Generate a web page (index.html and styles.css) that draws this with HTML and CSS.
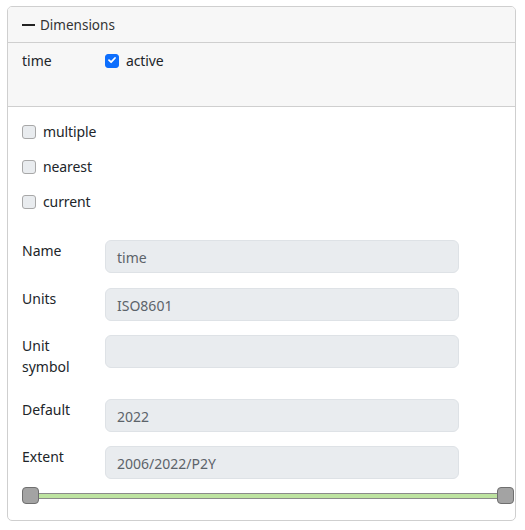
FILE: index.html
```html
<!DOCTYPE html>
<html>
<head>
<meta charset="utf-8">
<link rel="stylesheet" href="styles.css">
</head>
<body>
<div class="card">
  <div class="card-header"><span class="dash"></span>Dimensions</div>
  <div class="dim-row">
    <span class="dim-name">time</span>
    <label class="check"><span class="box checked"><svg viewBox="0 0 14 14" width="14" height="14"><path d="M4 7.2 L6.1 9.2 L10 5" fill="none" stroke="#fff" stroke-width="1.8" stroke-linecap="round" stroke-linejoin="round"/></svg></span>active</label>
  </div>
  <div class="card-body">
    <div class="checks">
      <label class="check"><span class="box"></span>multiple</label>
      <label class="check"><span class="box"></span>nearest</label>
      <label class="check"><span class="box"></span>current</label>
    </div>
    <div class="form">
      <div class="row"><div class="lbl">Name</div><div class="input">time</div></div>
      <div class="row"><div class="lbl">Units</div><div class="input">ISO8601</div></div>
      <div class="row"><div class="lbl">Unit<br>symbol</div><div class="input"></div></div>
      <div class="row"><div class="lbl">Default</div><div class="input">2022</div></div>
      <div class="row"><div class="lbl">Extent</div><div class="input">2006/2022/P2Y</div></div>
    </div>
    <div class="slider">
      <span class="thumb"></span>
      <span class="track"></span>
      <span class="thumb"></span>
    </div>
  </div>
</div>
</body>
</html>
```

FILE: styles.css
```css
* { box-sizing: border-box; }
body {
  margin: 0;
  padding: 6px 9px 9px 7px;
  font-family: "Noto Sans", "DejaVu Sans", sans-serif;
  font-size: 14px;
  color: #212529;
  background: #fff;
}
.card {
  border: 1px solid #cfcfcf;
  border-radius: 5px;
  overflow: hidden;
  width: 509px;
}
.card-header {
  height: 36px;
  background: #f7f7f7;
  border-bottom: 1px solid #cfcfcf;
  display: flex;
  align-items: center;
  padding-left: 14px;
  font-size: 13.5px;
  color: #333;
}
.dash {
  display: inline-block;
  width: 13px;
  height: 2px;
  background: #222;
  margin-right: 5px;
}
.dim-row {
  height: 64px;
  background: #f7f7f7;
  border-bottom: 1px solid #cfcfcf;
  display: flex;
  align-items: flex-start;
  padding: 7px 0 0 14px;
}
.dim-name { width: 83px; line-height: 21px; }
.check {
  display: flex;
  align-items: center;
  line-height: 21px;
  gap: 7px;
  letter-spacing: -0.1px;
}
.box {
  width: 14px;
  height: 14px;
  border: 1.5px solid #a8a8a8;
  border-radius: 3px;
  background: #e9ecef;
  display: inline-flex;
}
.box.checked {
  background: #0d6efd;
  border-color: #0d6efd;
}
.box svg { margin: -1.5px; }
.card-body {
  padding: 14px 14px 16px 14px;
}
.checks {
  display: flex;
  flex-direction: column;
  gap: 14px;
  margin-bottom: 28px;
}
.form {
  display: flex;
  flex-direction: column;
  gap: 14.5px;
}
.row {
  display: flex;
  align-items: flex-start;
}
.lbl {
  width: 83px;
  line-height: 21px;
  padding-bottom: 7px;
}
.input {
  width: 354px;
  height: 33px;
  background: #e9ecef;
  border: 1px solid #dee2e6;
  border-radius: 6px;
  padding: 0 11px;
  display: flex;
  align-items: center;
  color: #5c636a;
  font-size: 14px;
  padding-top: 2px;
}
.slider {
  display: flex;
  align-items: center;
  margin-top: 8px;
  margin-right: -13px;
}
.thumb {
  width: 17px;
  height: 17px;
  background: #a3a3a3;
  border: 1px solid #6f6f6f;
  border-radius: 4px;
  flex: none;
}
.track {
  flex: 1;
  height: 6px;
  background: #bde3a0;
  border-top: 1px solid #8a8a8a;
  border-bottom: 1px solid #8a8a8a;
}
```
